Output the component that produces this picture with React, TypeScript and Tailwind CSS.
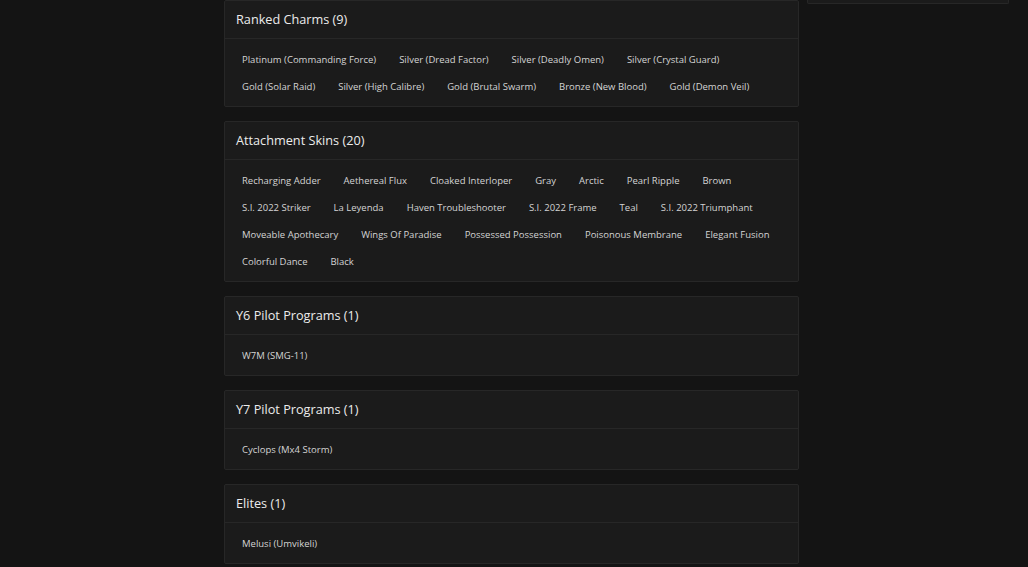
const sections = [
  {
    title: "Ranked Charms (9)",
    items: [
      "Platinum (Commanding Force)",
      "Silver (Dread Factor)",
      "Silver (Deadly Omen)",
      "Silver (Crystal Guard)",
      "Gold (Solar Raid)",
      "Silver (High Calibre)",
      "Gold (Brutal Swarm)",
      "Bronze (New Blood)",
      "Gold (Demon Veil)",
    ],
  },
  {
    title: "Attachment Skins (20)",
    items: [
      "Recharging Adder",
      "Aethereal Flux",
      "Cloaked Interloper",
      "Gray",
      "Arctic",
      "Pearl Ripple",
      "Brown",
      "S.I. 2022 Striker",
      "La Leyenda",
      "Haven Troubleshooter",
      "S.I. 2022 Frame",
      "Teal",
      "S.I. 2022 Triumphant",
      "Moveable Apothecary",
      "Wings Of Paradise",
      "Possessed Possession",
      "Poisonous Membrane",
      "Elegant Fusion",
      "Colorful Dance",
      "Black",
    ],
  },
  { title: "Y6 Pilot Programs (1)", items: ["W7M (SMG-11)"] },
  { title: "Y7 Pilot Programs (1)", items: ["Cyclops (Mx4 Storm)"] },
  { title: "Elites (1)", items: ["Melusi (Umvikeli)"] },
];

function Section({ title, items }: { title: string; items: string[] }) {
  return (
    <section className="bg-[#1b1b1b] border border-[#272727] rounded-[2px]">
      <div className="h-[38px] flex items-center px-[11px] border-b border-[#272727]">
        <h2 className="text-[12.7px] font-medium text-[#ececec]">{title}</h2>
      </div>
      <div className="flex flex-wrap gap-x-[23px] pl-[17px] pr-[12px] pt-[7px] pb-[6px]">
        {items.map((item) => (
          <span key={item} className="leading-[27px] text-[9.5px] font-medium text-[#d4d4d4] whitespace-nowrap">
            {item}
          </span>
        ))}
      </div>
    </section>
  );
}

export default function App() {
  return (
    <main
      className="min-h-screen bg-[#141414] pl-[224px] flex gap-[8px] items-start"
      style={{ fontFamily: '"Open Sans", "Noto Sans", sans-serif' }}
    >
      <div className="w-[575px] flex flex-col gap-[14px] pb-[20px]">
        {sections.map((s) => (
          <Section key={s.title} title={s.title} items={s.items} />
        ))}
      </div>
      <aside className="w-[202px] h-[4px] bg-[#1b1b1b] border-x border-b border-[#272727] rounded-b-[2px]" />
    </main>
  );
}
